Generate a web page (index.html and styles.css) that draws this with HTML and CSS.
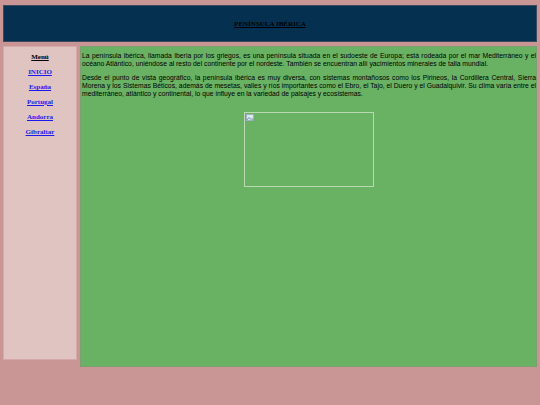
FILE: index.html
```html
<!DOCTYPE html>
<html lang="es">
<head>
<meta charset="utf-8">
<title>Península Ibérica</title>
<link rel="stylesheet" href="styles.css">
</head>
<body>
<header class="cabecera">
  <h1 class="titulo"><a href="#">PENÍNSULA IBÉRICA</a></h1>
</header>
<div class="fila">
  <nav class="menu">
    <a class="menu-titulo" href="#">Menú</a>
    <a class="enlace" href="#">INICIO</a>
    <a class="enlace" href="#">España</a>
    <a class="enlace" href="#">Portugal</a>
    <a class="enlace" href="#">Andorra</a>
    <a class="enlace" href="#">Gibraltar</a>
  </nav>
  <main class="contenido">
    <p>La península ibérica, llamada Iberia por los griegos, es una península situada en el sudoeste de Europa; está rodeada por el mar Mediterráneo y el océano Atlántico, uniéndose al resto del continente por el nordeste. También se encuentran allí yacimientos minerales de talla mundial.</p>
    <p>Desde el punto de vista geográfico, la península ibérica es muy diversa, con sistemas montañosos como los Pirineos, la Cordillera Central, Sierra Morena y los Sistemas Béticos, además de mesetas, valles y ríos importantes como el Ebro, el Tajo, el Duero y el Guadalquivir. Su clima varía entre el mediterráneo, atlántico y continental, lo que influye en la variedad de paisajes y ecosistemas.</p>
    <div class="imagen">
      <svg class="icono-roto" width="9" height="9" viewBox="0 0 9 9">
        <rect x="0.5" y="0.5" width="7" height="6" fill="#dfe8ef" stroke="#9fb3c4" stroke-width="1"/>
        <path d="M1 6 L3 3.5 L5 5.5 L6 4.5 L8 6.5" fill="none" stroke="#6d8fa8" stroke-width="1"/>
        <path d="M5 7 L8 9" stroke="#6ab263" stroke-width="1.5"/>
      </svg>
    </div>
  </main>
</div>
</body>
</html>
```
FILE: styles.css
```css
html, body {
  margin: 0;
  padding: 0;
}
body {
  background: #c99595;
  font-family: "Liberation Serif", "Times New Roman", serif;
  padding: 5px 3px 0 3px;
}
.cabecera {
  height: 35px;
  background: #06304f;
  border: 1px solid #3a4a5e;
  display: flex;
  align-items: center;
  justify-content: center;
}
.titulo {
  margin: 0;
  font-size: 7px;
  font-weight: bold;
  line-height: 1;
  padding-top: 2px;
}
.titulo a {
  color: #000;
  text-decoration: underline;
}
.fila {
  display: flex;
  align-items: flex-start;
  gap: 3px;
  margin-top: 4px;
}
.menu {
  width: 72px;
  height: 306px;
  background: #e0c4c2;
  border: 1px solid #d6a9a8;
  display: flex;
  flex-direction: column;
  align-items: center;
  gap: 7px;
  padding-top: 6px;
  box-sizing: content-box;
}
.menu a {
  font-size: 7px;
  font-weight: bold;
  line-height: 8px;
  text-decoration: underline;
}
.menu-titulo {
  color: #000;
}
.enlace {
  color: #1a1aee;
}
.contenido {
  flex: 1;
  height: 314px;
  background: #6ab263;
  border: 1px solid #7aa070;
  padding: 5px 0 0 1px;
  font-family: "Liberation Sans", Arial, sans-serif;
  font-size: 6.8px;
  line-height: 8px;
  color: #000;
}
.contenido p {
  margin: 0 0 6px 0;
  text-align: justify;
}
.imagen {
  width: 128px;
  height: 73px;
  border: 1px solid #b9d8b3;
  margin: 14px auto 0 auto;
  position: relative;
}
.icono-roto {
  position: absolute;
  left: 1px;
  top: 1px;
}
```
